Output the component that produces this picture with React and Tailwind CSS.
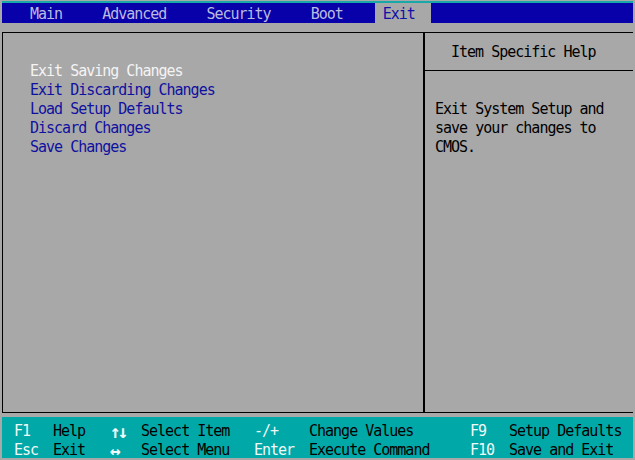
import React from 'react';

const tabs = ['Main', 'Advanced', 'Security', 'Boot', 'Exit'];
const items = ['Exit Saving Changes', 'Exit Discarding Changes', 'Load Setup Defaults', 'Discard Changes', 'Save Changes'];

// footer columns: top row then bottom row
const footer = [
  { w: 'w-[39px]', top: 'F1', bottom: 'Esc', key: true },
  { w: 'w-[57px]', top: 'Help', bottom: 'Exit' },
  { w: 'w-[31px]', top: '↑↓', bottom: '↔', key: true, arrow: true },
  { w: 'w-[113px]', top: 'Select Item', bottom: 'Select Menu' },
  { w: 'w-[55px]', top: '-/+', bottom: 'Enter', key: true },
  { w: 'w-[161px]', top: 'Change Values', bottom: 'Execute Command' },
  { w: 'w-[39px]', top: 'F9', bottom: 'F10', key: true },
  { w: 'w-[120px]', top: 'Setup Defaults', bottom: 'Save and Exit' },
];

const App = () => {
  return (
    <div className="w-[635px] h-[460px] bg-[#a8a8a8] overflow-hidden font-['DejaVu_Sans_Mono',monospace] text-[15px] leading-[19px] tracking-[-1px] flex flex-col">
      {/* menu bar */}
      <div className="mt-[1px] mx-[2px] border-t-2 border-[#18a8a8] bg-[#0800a8] h-[22px] flex pl-[20px] gap-6">
        {tabs.map((t) =>
          t === 'Exit' ? (
            <div key={t} className="bg-[#a8a8a8] text-[#1010a8] pl-2 pr-4 h-[20px] pt-[2px] flex items-center">
              {t}
            </div>
          ) : (
            <div key={t} className="text-[#b8bce0] px-2 h-[20px] pt-[2px] flex items-center">
              {t}
            </div>
          )
        )}
      </div>

      {/* main frame */}
      <div className="mt-[9px] mx-[2px] h-[381px] border-t border-l border-b border-black flex">
        <div className="w-[422px] border-r-2 border-black pt-[29px] pl-[27px]">
          {items.map((it, i) => (
            <div key={it} className={i === 0 ? 'text-[#f4f4f4]' : 'text-[#1010a0]'}>
              {it}
            </div>
          ))}
        </div>
        <div className="flex-1 flex flex-col text-black">
          <div className="h-[38px] border-b border-black flex items-center pt-[2px] pl-[26px]">Item Specific Help</div>
          <div className="pt-[29px] pl-[10px]">
            <div>Exit System Setup and</div>
            <div>save your changes to</div>
            <div>CMOS.</div>
          </div>
        </div>
      </div>

      {/* footer */}
      <div className="mt-[4px] mx-[2px] h-[41px] bg-[#00a8a8] pt-[5px] pl-[12px] flex">
        {footer.map((c, i) => (
          <div
            key={i}
            className={`${c.w} shrink-0 whitespace-nowrap leading-[19px] ${c.key ? 'text-[#f0f8f8]' : 'text-black'} ${c.arrow ? 'text-[18px] font-bold tracking-[-3px]' : ''}`}
          >
            <div className="h-[19px]">{c.top}</div>
            <div className="h-[19px]">{c.bottom}</div>
          </div>
        ))}
      </div>
    </div>
  );
};

export default App;
